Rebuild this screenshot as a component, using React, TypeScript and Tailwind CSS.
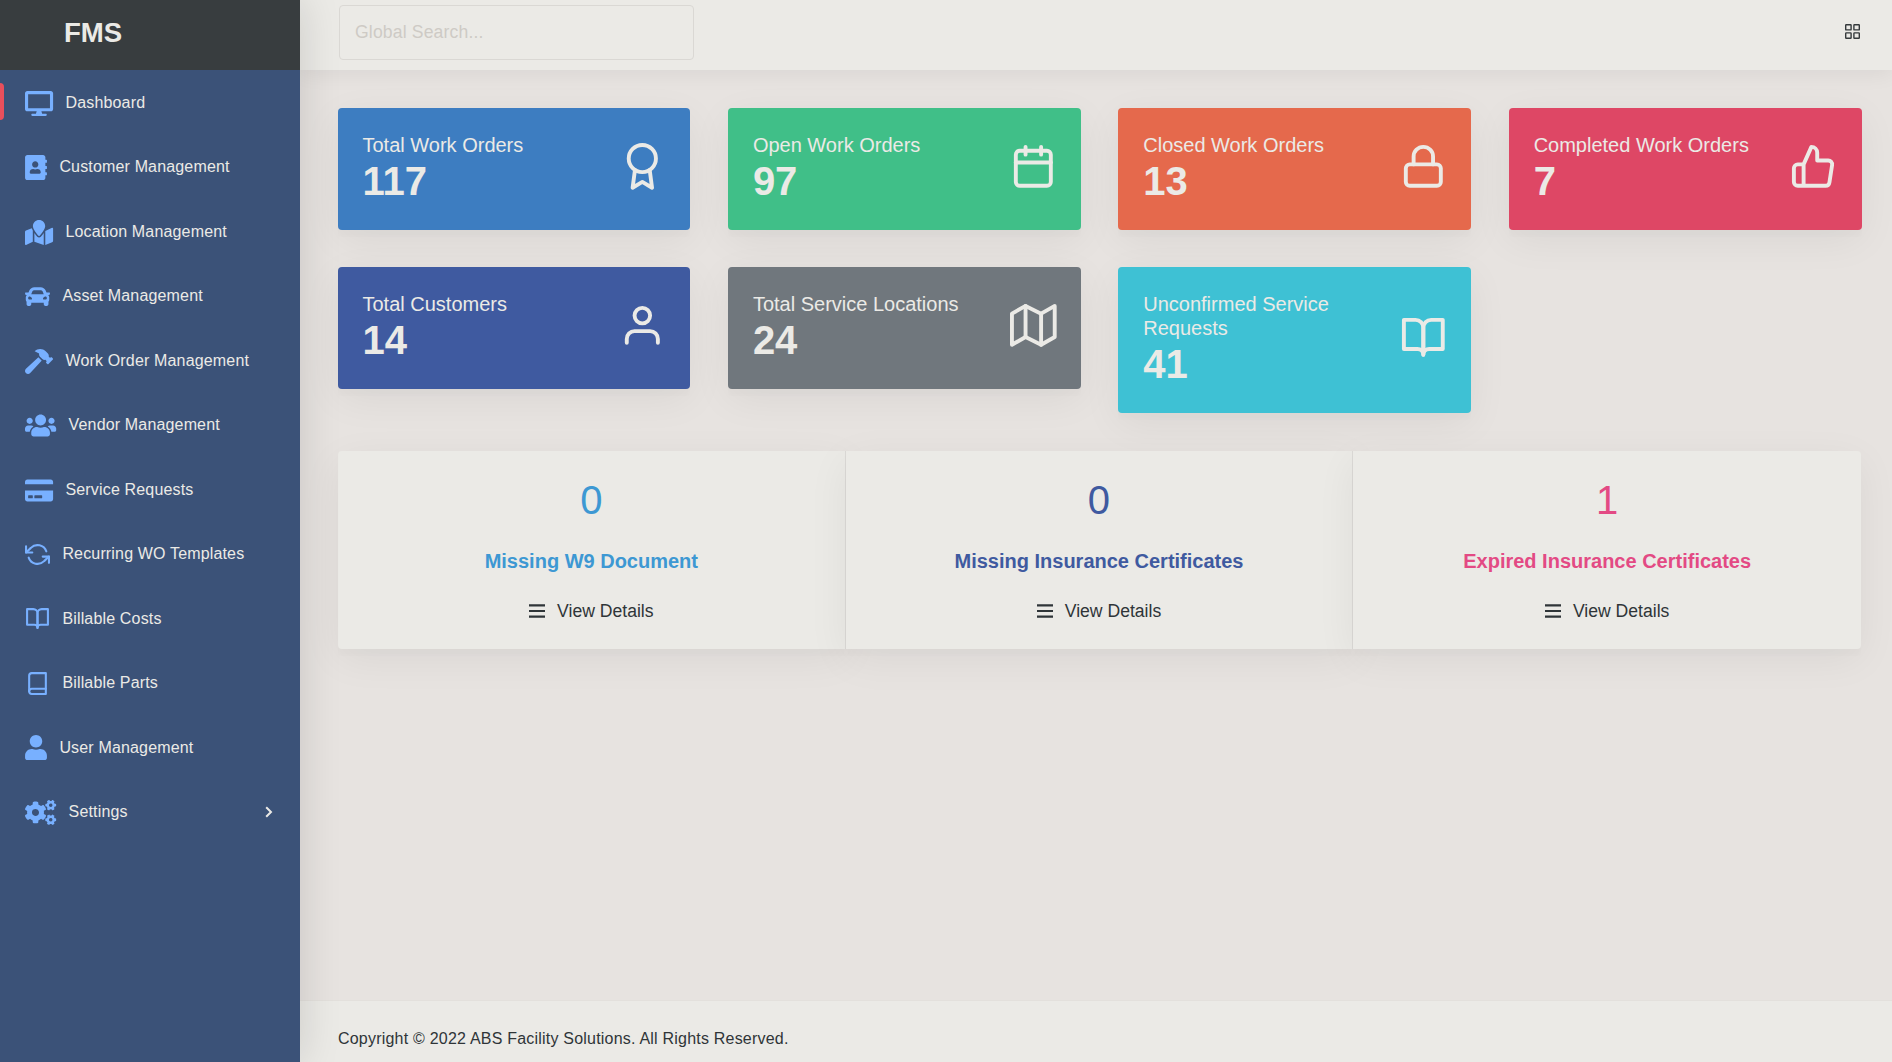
import type { ComponentType } from "react";
import {
  FaDesktop,
  FaAddressBook,
  FaMapMarked,
  FaCar,
  FaHammer,
  FaUsers,
  FaCreditCard,
  FaUser,
  FaCogs,
} from "react-icons/fa";
import {
  FiAward,
  FiBook,
  FiBookOpen,
  FiCalendar,
  FiLock,
  FiMap,
  FiRefreshCcw,
  FiThumbsUp,
  FiUser,
} from "react-icons/fi";

type Icon = ComponentType<{ className?: string }>;

const menu: { label: string; icon: Icon; width: string; active?: boolean; more?: boolean }[] = [
  { label: "Dashboard", icon: FaDesktop, width: "w-[28.1px]", active: true },
  { label: "Customer Management", icon: FaAddressBook, width: "w-[22px]" },
  { label: "Location Management", icon: FaMapMarked, width: "w-[28.1px]" },
  { label: "Asset Management", icon: FaCar, width: "w-[25px]" },
  { label: "Work Order Management", icon: FaHammer, width: "w-[28.1px]" },
  { label: "Vendor Management", icon: FaUsers, width: "w-[31.2px]" },
  { label: "Service Requests", icon: FaCreditCard, width: "w-[28.1px]" },
  { label: "Recurring WO Templates", icon: FiRefreshCcw, width: "w-[25px]" },
  { label: "Billable Costs", icon: FiBookOpen, width: "w-[25px]" },
  { label: "Billable Parts", icon: FiBook, width: "w-[25px]" },
  { label: "User Management", icon: FaUser, width: "w-[22px]" },
  { label: "Settings", icon: FaCogs, width: "w-[31.2px]", more: true },
];

const stats: { label: string; value: number; icon: Icon; color: string }[] = [
  { label: "Total Work Orders", value: 117, icon: FiAward, color: "bg-[#3d7dc1]" },
  { label: "Open Work Orders", value: 97, icon: FiCalendar, color: "bg-[#40bf88]" },
  { label: "Closed Work Orders", value: 13, icon: FiLock, color: "bg-[#e5694c]" },
  { label: "Completed Work Orders", value: 7, icon: FiThumbsUp, color: "bg-[#de4765]" },
  { label: "Total Customers", value: 14, icon: FiUser, color: "bg-[#3f5aa0]" },
  { label: "Total Service Locations", value: 24, icon: FiMap, color: "bg-[#70777d]" },
  { label: "Unconfirmed Service Requests", value: 41, icon: FiBookOpen, color: "bg-[#3ec1d4]" },
];

const alerts = [
  { label: "Missing W9 Document", value: 0, color: "text-[#3d98d3]" },
  { label: "Missing Insurance Certificates", value: 0, color: "text-[#3f5aa0]" },
  { label: "Expired Insurance Certificates", value: 1, color: "text-[#e34a84]" },
];

const softShadow = "shadow-[0_10px_40px_rgba(0,0,0,0.06),0_7px_2px_rgba(0,0,0,0.012)]";

function Sidebar() {
  return (
    <aside className="z-10 flex w-[300px] shrink-0 flex-col bg-[#3b5278] shadow-[0_0_40px_rgba(0,0,0,0.14)]">
      <div className="flex h-[70px] shrink-0 items-center bg-[#383d3f] pb-1 pl-16 text-[27.6px] font-bold text-[#ebeae6]">
        FMS
      </div>
      <nav className="flex flex-col pt-px">
        {menu.map(({ label, icon: ItemIcon, width, active, more }) => (
          <a key={label} className="flex h-[64.47px] items-center text-base tracking-[0.16px] text-[#ebeae6]">
            <span className={`mb-[3px] h-[37px] w-1 rounded-r-sm ${active ? "bg-[#e84f5c]" : ""}`} />
            <ItemIcon className={`ml-[21px] h-[25px] shrink-0 overflow-visible text-[#78b0ff] ${width}`} />
            <span className="ml-[12.4px] pb-[0.6px]">{label}</span>
            {more && (
              <svg viewBox="0 0 8 12" className="mr-[27px] mb-px ml-auto h-3 w-2" fill="none" stroke="currentColor" strokeWidth="2">
                <path d="M1.2 1.2 6 6l-4.8 4.8" />
              </svg>
            )}
          </a>
        ))}
      </nav>
    </aside>
  );
}

function Header() {
  return (
    <header className="z-[5] flex h-[70px] shrink-0 items-start justify-between bg-[#ebeae6] pt-[5px] pr-8 pl-[39px] shadow-[0_4px_20px_rgba(0,0,0,0.06)]">
      <input
        placeholder="Global Search..."
        className="h-[55px] w-[355px] rounded border border-[#dad8d4] bg-transparent px-[15px] text-[17.6px] tracking-[0.15px] placeholder:text-[#cecac5]"
      />
      <svg viewBox="0 0 15 15" className="mt-[19px] size-[15px] text-[#353a3c]" fill="none" stroke="currentColor" strokeWidth="1.4">
        <rect x="0.7" y="0.7" width="5.4" height="5.2" rx="0.5" />
        <rect x="8.9" y="0.7" width="5.4" height="5.2" rx="0.5" />
        <rect x="0.7" y="8.9" width="5.4" height="5.4" rx="0.5" />
        <rect x="8.9" y="8.9" width="5.4" height="5.4" rx="0.5" />
      </svg>
    </header>
  );
}

export default function App() {
  return (
    <div className="flex h-[1062px] w-[1892px] overflow-hidden bg-[#e7e3e0] font-['Liberation_Sans',Arial,sans-serif] text-[#2f3538]">
      <Sidebar />
      <div className="flex flex-1 flex-col">
        <Header />
        <main className="flex-1 pt-[38px] pr-[30.5px] pl-[37.5px]">
          <section className="grid grid-cols-4 items-start gap-x-[37.5px] gap-y-[37px]">
            {stats.map(({ label, value, icon: StatIcon, color }) => (
              <div
                key={label}
                className={`flex items-center justify-between rounded pt-[25px] pr-[24.5px] pb-[25px] pl-[25px] text-[#ebeae6] ${color} ${softShadow}`}
              >
                <div className="w-[225px]">
                  <div className="text-xl leading-6">{label}</div>
                  <div className="text-[40px] leading-[48px] font-bold">{value}</div>
                </div>
                <StatIcon className="mb-[5px] size-[46.67px] shrink-0 overflow-visible" />
              </div>
            ))}
          </section>
          <section className="mt-[38px] mr-[0.5px] ml-[0.5px] grid grid-cols-3">
            {alerts.map(({ label, value, color }) => (
              <div
                key={label}
                className={`flex h-[198px] flex-col items-center border-r border-[#dbd9d6] bg-[#ebeae6] first:rounded-l last:rounded-r last:border-r-0 ${softShadow}`}
              >
                <div className={`mt-[25px] text-[40px] leading-[48px] ${color}`}>{value}</div>
                <div className={`mt-[25px] text-xl leading-6 font-bold ${color}`}>{label}</div>
                <a className="mt-[26px] flex items-center text-[17.6px] leading-6">
                  <svg viewBox="0 0 16 14" className="mr-3 h-[14px] w-4" fill="currentColor">
                    <path d="M0 .2h16v2.2H0zM0 5.9h16v2.2H0zM0 11.6h16v2.2H0z" />
                  </svg>
                  View Details
                </a>
              </div>
            ))}
          </section>
        </main>
        <footer className="flex h-[62px] shrink-0 items-center border-t border-[#e3e0dc] bg-[#ebeae6] pt-[14px] pl-[38px] text-base tracking-[0.21px]">
          Copyright © 2022 ABS Facility Solutions. All Rights Reserved.
        </footer>
      </div>
    </div>
  );
}
